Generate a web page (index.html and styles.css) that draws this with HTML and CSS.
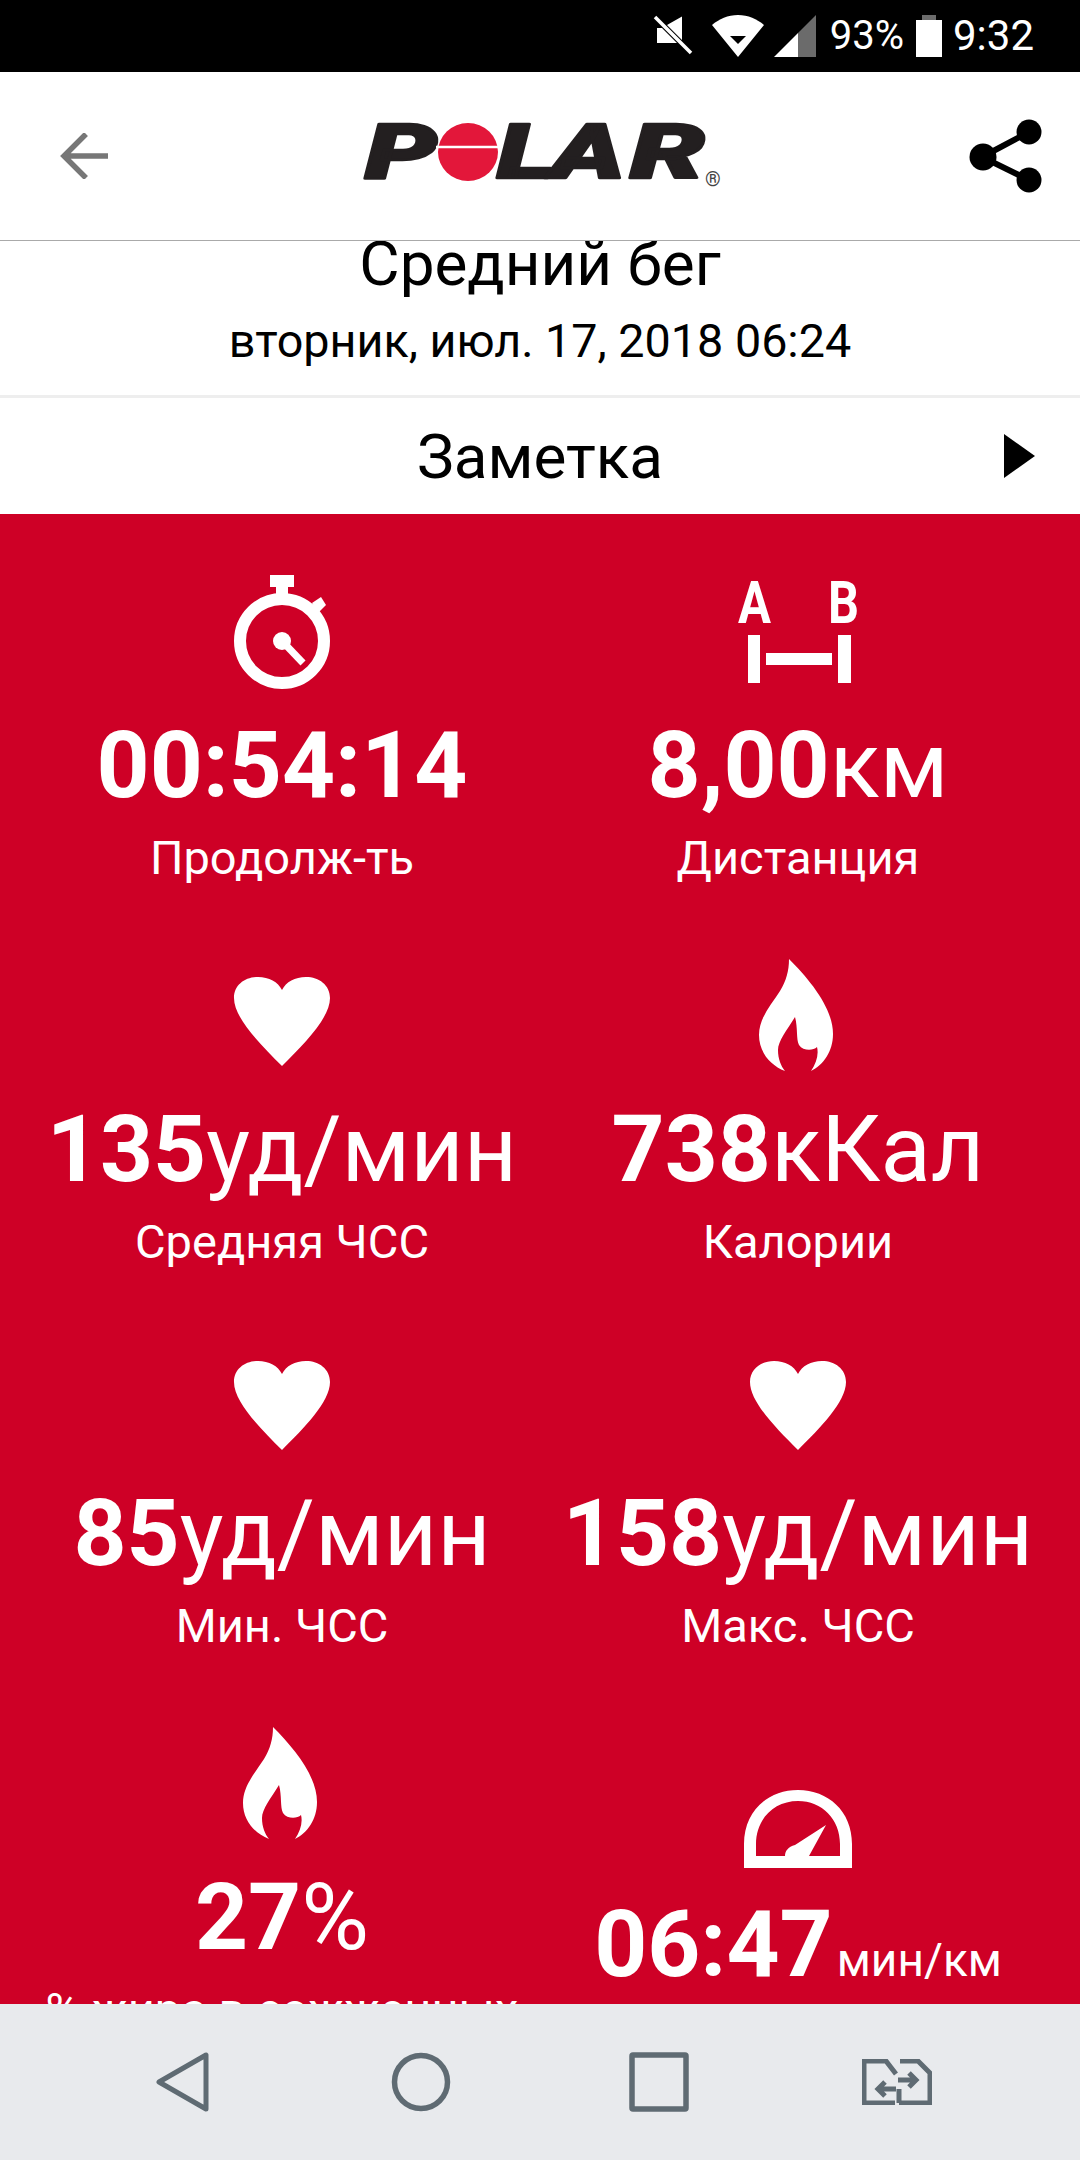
FILE: index.html
```html
<!DOCTYPE html>
<html lang="ru">
<head>
<meta charset="utf-8">
<title>Polar</title>
<link rel="stylesheet" href="styles.css">
</head>
<body>
<div class="screen">
  <div class="status">
    <svg class="st-mute" width="40" height="40" viewBox="0 0 40 40"><path fill="#fff" d="M4 13H9L24 28H4ZM14 10L29 1.5V25Z"/><path stroke="#fff" stroke-width="3.5" d="M2 2L38 38"/></svg>
    <svg class="st-wifi" width="52" height="42" viewBox="0 0 52 42"><path fill="#fff" d="M0 10C7 4 16 0 26 0S45 4 52 10L26 42Z"/><path fill="#000" d="M18 21H34L26 29Z"/></svg>
    <svg class="st-signal" width="42" height="42" viewBox="0 0 42 42"><path fill="#fff" d="M0 42H24V18Z"/><path fill="#6b6b6b" d="M24 42H42V0L24 18Z"/></svg>
    <span class="st-pct">93%</span>
    <svg class="st-batt" width="26" height="42" viewBox="0 0 26 42"><path fill="#6b6b6b" d="M6 0H20V5H6Z"/><path fill="#fff" d="M0 5H26V42H0Z"/></svg>
    <span class="st-time">9:32</span>
  </div>

  <header class="header">
    <svg class="back" width="48" height="46" viewBox="0 0 48 46"><path fill="none" stroke="#777" stroke-width="5.5" d="M26 1L4 23L26 45M4 23H48"/></svg>
    <svg class="logo" width="360" height="68" viewBox="0 0 360 68">
      <g class="logo-letters">
        <text x="5" y="56" textLength="72" lengthAdjust="spacingAndGlyphs">P</text>
        <text x="137" y="56" textLength="58" lengthAdjust="spacingAndGlyphs">L</text>
        <text x="191" y="56" textLength="74" lengthAdjust="spacingAndGlyphs">A</text>
        <text x="270" y="56" textLength="75" lengthAdjust="spacingAndGlyphs">R</text>
      </g>
      <ellipse cx="108" cy="30" rx="30" ry="29" fill="#e3173a"/>
      <path stroke="#fff" stroke-width="2.5" d="M76 25H140"/>
      <text class="logo-reg" x="345" y="64">®</text>
    </svg>
    <svg class="share" width="74" height="74" viewBox="0 0 74 74"><path fill="none" stroke="#000" stroke-width="6" d="M60 13L13 38L60 61"/><circle cx="60" cy="13" r="12.5"/><circle cx="14" cy="38" r="13.5"/><circle cx="60" cy="61" r="12.5"/></svg>
  </header>

  <section class="info">
    <h1 class="title">Средний бег</h1>
    <p class="date">вторник, июл. 17, 2018 06:24</p>
  </section>

  <div class="note">
    <span class="note-text">Заметка</span>
    <svg class="note-arrow" width="31" height="44" viewBox="0 0 31 44"><path d="M0 0L31 22L0 44Z"/></svg>
  </div>

  <main class="stats">
    <div class="cell">
      <svg class="icon" viewBox="0 0 120 120"><path d="M48 3H72V15H66V24H54V15H48Z"/><circle cx="60" cy="69" r="42" fill="none" stroke="#fff" stroke-width="12"/><path d="M90 31L99 25L104 33L96 41Z"/><circle cx="60" cy="69" r="9"/><path stroke="#fff" stroke-width="7" d="M60 69L81 91"/></svg>
      <div class="value"><b>00:54:14</b></div>
      <div class="label">Продолж-ть</div>
    </div>
    <div class="cell">
      <svg class="icon" viewBox="0 0 120 120"><text class="ab" x="0" y="51" textLength="33" lengthAdjust="spacingAndGlyphs">A</text><text class="ab" x="90" y="51" textLength="31" lengthAdjust="spacingAndGlyphs">B</text><path d="M10 63H22V111H10ZM100 63H113V111H100ZM28 81H94V93H28Z"/></svg>
      <div class="value"><b>8,00</b>км</div>
      <div class="label">Дистанция</div>
    </div>
    <div class="cell">
      <svg class="icon" viewBox="0 0 120 120"><path d="M60 110C38 88 12 62 12 42C12 29 23 21 36 21C47 21 56 26 60 34C64 26 73 21 84 21C97 21 108 29 108 42C108 62 82 88 60 110Z"/></svg>
      <div class="value"><b>135</b>уд/мин</div>
      <div class="label">Средняя ЧСС</div>
    </div>
    <div class="cell">
      <svg class="icon" viewBox="0 0 120 120"><path d="M51 3C72 24 95 52 95 78C95 96 85 109 73 115C78 107 81 99 79 91C75 95 65 95 61 89C58 83 60 72 57 61C49 74 40 85 40 94C40 103 43 110 47 115C32 109 21 96 21 79C21 62 33 49 42 35C48 25 51 15 51 3Z"/></svg>
      <div class="value"><b>738</b>кКал</div>
      <div class="label">Калории</div>
    </div>
    <div class="cell">
      <svg class="icon" viewBox="0 0 120 120"><path d="M60 110C38 88 12 62 12 42C12 29 23 21 36 21C47 21 56 26 60 34C64 26 73 21 84 21C97 21 108 29 108 42C108 62 82 88 60 110Z"/></svg>
      <div class="value"><b>85</b>уд/мин</div>
      <div class="label">Мин. ЧСС</div>
    </div>
    <div class="cell">
      <svg class="icon" viewBox="0 0 120 120"><path d="M60 110C38 88 12 62 12 42C12 29 23 21 36 21C47 21 56 26 60 34C64 26 73 21 84 21C97 21 108 29 108 42C108 62 82 88 60 110Z"/></svg>
      <div class="value"><b>158</b>уд/мин</div>
      <div class="label">Макс. ЧСС</div>
    </div>
    <div class="cell">
      <svg class="icon" viewBox="0 0 120 120"><path d="M51 3C72 24 95 52 95 78C95 96 85 109 73 115C78 107 81 99 79 91C75 95 65 95 61 89C58 83 60 72 57 61C49 74 40 85 40 94C40 103 43 110 47 115C32 109 21 96 21 79C21 62 33 49 42 35C48 25 51 15 51 3Z"/></svg>
      <div class="value"><b>27</b>%</div>
      <div class="label">% жира в сожженных</div>
    </div>
    <div class="cell cell-low">
      <svg class="icon" viewBox="0 0 120 120"><path fill-rule="evenodd" d="M6 117V93C6 60 30 39 60 39C90 39 114 60 114 93V117ZM18 105H47C47 100 50 96 57 94L88 74L71 105H102V93C102 68 84 50 60 50C36 50 18 68 18 93Z"/></svg>
      <div class="value"><b>06:47</b><small class="unit-small">мин/км</small></div>
      <div class="label">Средний темп</div>
    </div>
  </main>

  <nav class="nav">
    <svg width="54" height="60" viewBox="0 0 54 60"><path fill="none" stroke="#5f6b73" stroke-width="5" stroke-linejoin="round" d="M50 3V57L3 30Z"/></svg>
    <svg width="60" height="60" viewBox="0 0 60 60"><circle cx="30" cy="30" r="26.5" fill="none" stroke="#5f6b73" stroke-width="5.5"/></svg>
    <svg width="60" height="60" viewBox="0 0 60 60"><rect x="3" y="3" width="54" height="54" rx="1" fill="none" stroke="#5f6b73" stroke-width="5.5"/></svg>
    <svg width="70" height="46" viewBox="0 0 70 46"><g fill="none" stroke="#5f6b73" stroke-width="5"><path d="M33 44H2V2H24L34 15"/><path d="M37 44H68V14L56 2H38"/><path d="M36 21H54M47 14L54 21L47 28"/><path d="M34 30H16M23 23L16 30L23 37"/><path d="M37 30V44"/></g></svg>
  </nav>
</div>
</body>
</html>
```
FILE: styles.css
```css
* { box-sizing: border-box; }
html, body { margin: 0; padding: 0; }
body { font-family: Roboto, "Noto Sans", sans-serif; background: #fff; color: #000; }
.screen { width: 1080px; height: 2160px; display: flex; flex-direction: column; overflow: hidden; }

.status { height: 72px; flex: none; background: #000; color: #fff; display: flex; align-items: flex-start; justify-content: flex-end; padding: 15px 46px 0 0; font-size: 40px; line-height: 42px; }
.status svg { display: block; flex: none; }
.st-mute { margin-right: 19px; }
.st-wifi { margin-right: 10px; }
.st-signal { margin-right: 14px; }
.st-batt { margin: 0 11px 0 12px; }
.st-time { font-size: 42px; }

.header { height: 169px; flex: none; border-bottom: 1px solid #aaa; display: grid; grid-template-columns: 1fr auto 1fr; align-items: center; padding: 0 37px; }
.back { margin-left: 23px; display: block; }
.logo { display: block; overflow: visible; }
.logo-letters { font-family: Roboto, sans-serif; font-weight: 900; font-style: italic; font-size: 76px; fill: #231f20; stroke: #231f20; stroke-width: 2.5px; stroke-linejoin: round; }
.logo-reg { font-family: Roboto, sans-serif; font-size: 20px; fill: #444; }
.share { justify-self: end; display: block; }

.info { height: 154px; flex: none; text-align: center; overflow: hidden; }
.title { margin: 0; font-weight: 400; font-size: 62px; line-height: 46px; }
.date { margin: 30px 0 0; font-size: 46.7px; line-height: 48px; }

.note { height: 119px; flex: none; border-top: 3px solid #eee; display: grid; grid-template-columns: 1fr auto 1fr; align-items: center; padding: 0 45px; font-size: 62px; }
.note-text { grid-column: 2; }
.note-arrow { grid-column: 3; justify-self: end; display: block; }

.stats { flex: 1; min-height: 0; overflow: hidden; background: #ce0026; color: #fff; display: grid; grid-template-columns: 1fr 1fr; grid-auto-rows: 384px; padding: 0 24px; }
.cell { padding-top: 58px; text-align: center; overflow: visible; }
.cell-low { padding-top: 85px; }
.icon { display: block; width: 120px; height: 120px; margin: 0 auto; fill: #fff; overflow: visible; }
.ab { font-family: Roboto, sans-serif; font-weight: 700; font-size: 59px; fill: #fff; }
.value { margin-top: 24px; font-size: 92.6px; line-height: 100px; white-space: nowrap; }
.value b { font-weight: 700; }
.unit-small { font-size: 46px; margin-left: 4px; }
.label { margin-top: 17px; font-size: 47px; line-height: 50px; white-space: nowrap; }

.nav { height: 156px; flex: none; background: #e8eaed; display: grid; grid-template-columns: repeat(4, 238px); padding-left: 64px; justify-items: center; align-items: center; }
.nav svg { display: block; }
```
